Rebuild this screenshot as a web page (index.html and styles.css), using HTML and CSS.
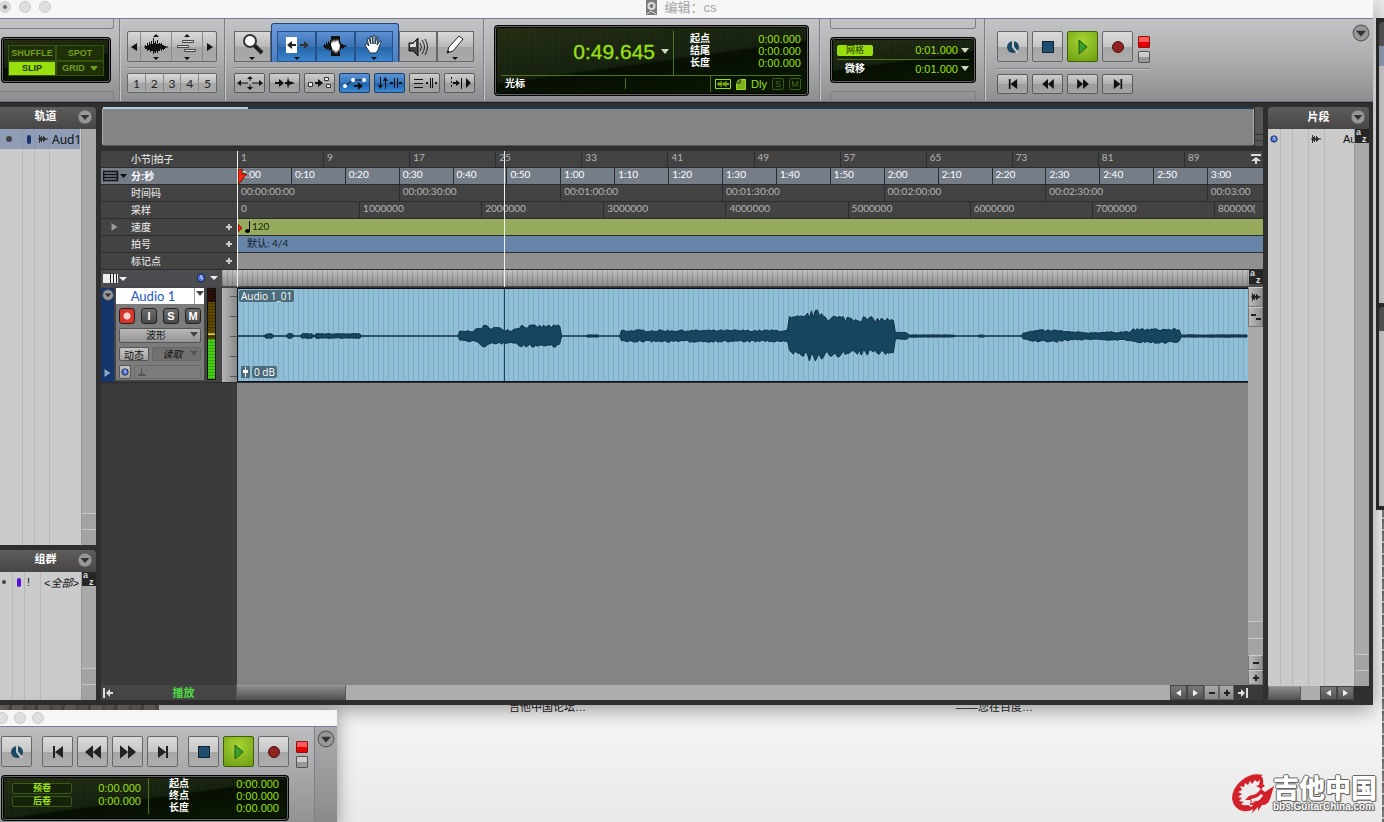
FILE: index.html
```html
<!DOCTYPE html>
<html lang="zh-CN">
<head>
<meta charset="utf-8">
<title>编辑：cs</title>
<link rel="stylesheet" href="styles.css">
</head>
<body>
<svg class="sprite" aria-hidden="true">
  <symbol id="i-down" viewBox="0 0 8 5"><path d="M0 0h8L4 5z"/></symbol>
  <symbol id="i-wave" viewBox="0 0 24 18"><path d="M0 9h24M1.500 7v4M2.500 8v3M3.500 5v8M4.500 7v5M5.500 4v8M6.500 6v8M7.500 3v10M8.500 6v7M9.500 0v16M10.500 5v9M11.500 3v12M12.500 6v7M13.500 2v13M14.500 6v7M15.500 5v8M16.500 6v5M17.500 5v8M18.500 7v4M19.500 7v5M20.500 8v3M21.500 8v2" fill="none" stroke="currentColor"/></symbol>
  <symbol id="i-clip" viewBox="0 0 10 10"><path d="M0 5h2M1.500 1v8M2.500 3v4M3.500 2v6M4.500 4v2M5.500 2v6M6.500 3v4M7.500 4v2M8 5h2" fill="none" stroke="currentColor"/></symbol>
  <symbol id="i-rtz" viewBox="0 0 14 12"><path d="M2 0h2v12H2zM12 0v12L4 6z"/></symbol>
  <symbol id="i-rew" viewBox="0 0 14 12"><path d="M7 0v12L0 6zM14 0v12L7 6z"/></symbol>
  <symbol id="i-ffw" viewBox="0 0 14 12"><path d="M0 0v12l7-6zM7 0v12l7-6z"/></symbol>
  <symbol id="i-end" viewBox="0 0 14 12"><path d="M10 0h2v12h-2zM2 0v12l8-6z"/></symbol>
  <symbol id="i-online" viewBox="0 0 14 14"><circle cx="7" cy="7" r="6" fill="#1d4a63"/><path d="M7 0v7l5 6" fill="none" stroke="#ccc" stroke-width="2"/></symbol>
  <symbol id="i-stop" viewBox="0 0 14 14"><path d="M1 1h12v12H1z" fill="#123"/><path d="M2 2h10v10H2z" fill="#1f4f6e"/></symbol>
  <symbol id="i-play" viewBox="0 0 14 16"><path d="M3 1v14l8-7z" fill="#37a12c" stroke="#1d5a14"/></symbol>
  <symbol id="i-rec" viewBox="0 0 14 14"><circle cx="7" cy="7" r="5.500" fill="#8f2320" stroke="#4b1512"/></symbol>
  <symbol id="i-menu" viewBox="0 0 16 16"><circle cx="8" cy="8" r="7" fill="#989898" stroke="#5c5c5c"/><path d="M3.500 6h9L8 11z" fill="#333"/></symbol>
  <symbol id="i-clock" viewBox="0 0 10 10"><circle cx="5" cy="5" r="4" fill="#4c74d8" stroke="#15204a"/><path d="M5 2v3l2 1" fill="none" stroke="#e8eeff"/></symbol>
  <symbol id="i-az" viewBox="0 0 14 14"><path d="M0 0h14v14H0z" fill="#262626"/><text x="1" y="6" class="az">a</text><text x="7" y="13" class="az">z</text></symbol>
  <symbol id="i-left" viewBox="0 0 6 8"><path d="M6 0v8L0 4z"/></symbol>
  <symbol id="i-right" viewBox="0 0 6 8"><path d="M0 0v8l6-4z"/></symbol>
  <symbol id="i-plus" viewBox="0 0 8 8"><path d="M3 1h2v2h2v2H5v2H3V5H1V3h2z"/></symbol>
  <symbol id="i-minus" viewBox="0 0 8 8"><path d="M1 3h6v2H1z"/></symbol>
</svg>

<main class="desktop">
  <div class="webpage"><span>吉他中国论坛…</span><span>——您在百度…</span></div>
  <div class="stones"></div>
  <aside class="side-window"><div class="sw-title"></div><div class="sw-head"></div><div class="sw-row"></div><div class="sw-list"></div><div class="sw-head"></div><div class="sw-list short"></div></aside>
  <div class="stones right"></div>

  <section class="window edit-window">
    <header class="titlebar">
      <div class="lights"><i class="on"></i><i></i><i></i></div>
      <h1><svg width="13" height="16" viewBox="0 0 13 16"><path d="M1 0h11v15H1z" fill="#7b7b80"/><circle cx="6.500" cy="6" r="4" fill="#ddd"/><circle cx="6.500" cy="6" r="2" fill="#77777c"/><path d="M2 14l4-3 5 3" fill="none" stroke="#ddd"/></svg>编辑：cs</h1>
    </header>

    <div class="toolbar">
      <section class="seg modes notched">
        <div class="lcd mode-lcd">
          <button>SHUFFLE</button><button>SPOT</button>
          <button class="on">SLIP</button><button>GRID<svg class="ic" width="8" height="5"><use href="#i-down"/></svg></button>
        </div>
      </section>

      <section class="seg zoomseg">
        <div class="group tall">
          <button class="thin" aria-label="缩小"><svg width="6" height="10"><use href="#i-left"/></svg></button>
          <button aria-label="音频缩放"><svg width="26" height="26" viewBox="0 0 26 26"><path d="M10 3l3-3 3 3zM10 23l3 3 3-3z"/><svg x="1" y="4" width="24" height="18"><use href="#i-wave"/></svg></svg></button>
          <button aria-label="MIDI缩放"><svg width="26" height="26" viewBox="0 0 26 26"><path d="M10 3l3-3 3 3zM10 23l3 3 3-3z"/><path d="M8.500 6.500h11v2h-11zM3.500 11.500h11v2h-11zM10.500 15.500h11v2h-11z" fill="#ddd" stroke="#444"/></svg></button>
          <button class="thin" aria-label="放大"><svg width="6" height="10"><use href="#i-right"/></svg></button>
        </div>
        <hr>
        <div class="group nums"><button>1</button><button>2</button><button>3</button><button>4</button><button>5</button></div>
      </section>

      <section class="seg tools">
        <div class="tool-row">
          <button class="tool" aria-label="缩放工具"><svg width="24" height="28" viewBox="0 0 24 28"><path d="M13 12l8 8" stroke="#222" stroke-width="4"/><circle cx="9" cy="8" r="6" fill="#fff" stroke="#333" stroke-width="2"/><path d="M8 24h6l-3 3z"/></svg></button>
          <div class="smart">
            <button aria-label="修剪"><svg width="26" height="28" viewBox="0 0 26 28"><path d="M2 4h11v16H2z" fill="#fff"/><path d="M3 12l5-4v3h4v2H8v3z" fill="#222"/><path d="M25 12l-5-4v3h-4v2h4v3z" fill="#333"/><path d="M10 24h6l-3 3z"/></svg></button>
            <button aria-label="选择"><svg width="26" height="28" viewBox="0 0 26 28"><svg x="1" y="4" width="24" height="18"><use href="#i-wave"/></svg><path d="M9 3h9v20H9z" fill="#111"/><path d="M9 12l1-5 1 3 1-4 1 4 1-4 1 3 1-3 1 4 1 2-1 7-1-3-1 5-1-4-1 4-1-5-1 3-1-4z" fill="#fff"/></svg></button>
            <button aria-label="抓取"><svg width="24" height="28" viewBox="0 0 24 28"><path d="M8 20L3 12q0-2 2-1l2 2L5 6q1-2 2 0l2 5-1-7q1-2 2 0l1 7V3q1-2 2 0v8l2-7q2-1 1 1l-1 7 3-4q2 0 1 1l-3 8-2 3z" fill="#fff" stroke="#234"/><path d="M9 24h6l-3 3z"/></svg></button>
          </div>
          <button class="tool" aria-label="刷选"><svg width="24" height="24" viewBox="0 0 24 24"><path d="M3 8h4l5-5v18l-5-5H3z" fill="#444" stroke="#111"/><path d="M4 9h3l3-3v6H4z" fill="#ddd"/><path d="M14 8q3 4 0 8M16 5q5 7 0 14M19 4q5 8 0 16" fill="none" stroke="#222"/></svg></button>
          <button class="tool" aria-label="铅笔"><svg width="24" height="28" viewBox="0 0 24 28"><path d="M4 20l2-6L16 3l4 3-10 12z" fill="#fff" stroke="#222"/><path d="M4 20l1-3 2 2z"/><path d="M9 24h6l-3 3z"/></svg></button>
        </div>
        <hr>
        <div class="btn-row">
          <button class="small" aria-label="缩放切换"><svg width="26" height="14" viewBox="0 0 26 14"><path d="M0 7l4-3v2.500h7v1H4V10zM26 7l-4-3v2.500h-7v1h7V10zM13 0l3 3h-2.500v2h-1V3H10zM13 14l3-3h-2.500V9h-1v2H10z"/></svg></button>
          <button class="small" aria-label="瞬态"><svg width="24" height="14" viewBox="0 0 24 14"><path d="M2 6h4V3l5 4-5 4V8H2zM12 6h2l1-5 1 4 6 2-6 2-1 4-1-5h-2z"/></svg></button>
          <button class="small" aria-label="镜像MIDI"><svg width="24" height="14" viewBox="0 0 24 14"><path d="M.5 6.500h4v4h-4zM16.500 1.500h4v3h-4zM18.500 8.500h4v3h-4z" fill="#eee" stroke="#333"/><path d="M7 6h3V3l5 4-5 4V8H7z"/></svg></button>
          <button class="small blue" aria-label="自动化跟随"><svg width="26" height="14" viewBox="0 0 26 14"><path d="M4 9l7-5h12" fill="none" stroke="#111"/><circle cx="3" cy="10" r="2" fill="#fff"/><circle cx="11" cy="4" r="2" fill="#fff"/><circle cx="22" cy="4" r="2" fill="#fff"/><path d="M12 9h4V6l5 4-5 4v-3h-4z"/></svg></button>
          <button class="small blue" aria-label="链接时间线"><svg width="26" height="14" viewBox="0 0 26 14"><path d="M3 1h1v8h2l-3 4-2-4h2zM8 13h1V5h2L8 1 6 5h2zM13 6h3v2h-3zM17 2h1v10h-1zM20 2h1v10h-1zM22 6h3v2h-3z"/></svg></button>
          <button class="small" aria-label="链接轨道"><svg width="26" height="14" viewBox="0 0 26 14"><path d="M2 3h9v1H2zM2 7h9v1H2zM2 11h9v1H2zM14 6h2v2h-2zM18 2h1v10h-1zM20 2h1v10h-1zM23 6h2v2h-2z"/></svg></button>
          <button class="small" aria-label="插入跟随"><svg width="24" height="14" viewBox="0 0 24 14"><path d="M3 1h1v2H3zM3 5h1v2H3zM3 9h1v2H3zM5 6h3V4l4 3-4 3V8H5zM13 2h1v11h-1zM18 2v10l5-5z"/></svg></button>
        </div>
      </section>

      <section class="seg counter">
        <div class="lcd counter-lcd">
          <div class="main-time"><output>0:49.645</output><svg class="pale" width="8" height="5"><use href="#i-down"/></svg></div>
          <dl class="times"><dt>起点</dt><dd>0:00.000</dd><dt>结尾</dt><dd>0:00.000</dd><dt>长度</dt><dd>0:00.000</dd></dl>
          <div class="cursor"><b>光标</b><span></span><div class="flags"><svg width="16" height="10" viewBox="0 0 16 10"><path d="M.5.5h15v9H.5z" fill="none" stroke="#9be012"/><path d="M2 5h12M4 3v4M6 2v6M9 3v4M11 2v6M13 4v2" stroke="#9be012"/></svg><svg width="10" height="11" viewBox="0 0 10 11"><path d="M3 .5h6.500v10h-9V4z" fill="#7fae22" stroke="#9be012"/><path d="M0 4h4V0" fill="none" stroke="#132306"/></svg><em>Dly</em><i>S</i><i>M</i></div></div>
        </div>
      </section>

      <section class="seg gridseg notched">
        <div class="lcd grid-lcd">
          <div><b class="chip">网格</b><output>0:01.000</output><svg class="pale" width="8" height="5"><use href="#i-down"/></svg></div>
          <div><b>微移</b><output>0:01.000</output><svg class="pale" width="8" height="5"><use href="#i-down"/></svg></div>
        </div>
      </section>

      <section class="seg transport">
        <div class="btn-row">
          <button class="big" aria-label="联机"><svg width="14" height="14"><use href="#i-online"/></svg></button>
          <button class="big" aria-label="停止"><svg width="14" height="14"><use href="#i-stop"/></svg></button>
          <button class="big green" aria-label="播放"><svg width="14" height="16"><use href="#i-play"/></svg></button>
          <button class="big" aria-label="录音"><svg width="14" height="14"><use href="#i-rec"/></svg></button>
          <div class="leds"><i class="red"></i><i></i></div>
        </div>
        <hr>
        <div class="btn-row">
          <button class="small" aria-label="回到开头"><svg width="12" height="10"><use href="#i-rtz"/></svg></button>
          <button class="small" aria-label="快退"><svg width="12" height="10"><use href="#i-rew"/></svg></button>
          <button class="small" aria-label="快进"><svg width="12" height="10"><use href="#i-ffw"/></svg></button>
          <button class="small" aria-label="到结尾"><svg width="12" height="10"><use href="#i-end"/></svg></button>
        </div>
      </section>
      <button class="round" aria-label="工具栏菜单"><svg width="18" height="18"><use href="#i-menu"/></svg></button>
    </div>

    <div class="workspace">
      <div class="sidebar left">
        <section class="panel tracks-panel">
          <header><h2>轨道</h2><button class="round" aria-label="轨道菜单"><svg width="16" height="16"><use href="#i-menu"/></svg></button></header>
          <div class="list">
            <div class="cols c1"><div class="row sel"><i class="dot"></i><i class="pill"></i><svg width="10" height="10"><use href="#i-clip"/></svg><span>Aud1</span></div></div>
            <div class="vscroll"><i></i><i></i></div>
          </div>
        </section>
        <section class="panel groups-panel">
          <header><h2>组群</h2><button class="round" aria-label="组群菜单"><svg width="16" height="16"><use href="#i-menu"/></svg></button></header>
          <div class="list">
            <div class="cols c2"><div class="row"><i class="dot sm"></i><i class="pill purple"></i><span>!</span><em>&lt;全部&gt;</em></div></div>
            <div class="vscroll"><svg width="14" height="14"><use href="#i-az"/></svg><i></i><i></i></div>
          </div>
        </section>
      </div>

      <div class="edit">
        <div class="overview"><div class="ov-area"><i></i></div><div class="ov-side"></div></div>

        <div class="timeline">
          <div class="ruler"><div class="lab">小节|拍子</div><div class="scale bars"><span>1</span><span>9</span><span>17</span><span>25</span><span>33</span><span>41</span><span>49</span><span>57</span><span>65</span><span>73</span><span>81</span><span>89</span></div><button class="totop" aria-label="收起标尺"><svg width="10" height="10" viewBox="0 0 10 10"><path d="M0 0h10v2H0zM5 3l5 4H6v3H4V7H0z"/></svg></button></div>
          <div class="ruler main"><div class="lab"><svg class="view" width="24" height="12" viewBox="0 0 24 12"><path d="M.5 1.500h14v9H.5zM0 4.500h15M0 7.500h15" fill="none" stroke="#111" stroke-width="1.500"/><path d="M17 4h7l-3.500 4z"/></svg>分:秒</div><div class="scale mins"><span>0:00</span><span>0:10</span><span>0:20</span><span>0:30</span><span>0:40</span><span>0:50</span><span>1:00</span><span>1:10</span><span>1:20</span><span>1:30</span><span>1:40</span><span>1:50</span><span>2:00</span><span>2:10</span><span>2:20</span><span>2:30</span><span>2:40</span><span>2:50</span><span>3:00</span></div><svg class="mark" width="9" height="15" viewBox="0 0 9 15"><path d="M0 0h4v5h5L1 14.500H0z" fill="#ee2a12" stroke="#5b0e05"/></svg></div>
          <div class="ruler"><div class="lab">时间码</div><div class="scale code"><span>00:00:00:00</span><span>00:00:30:00</span><span>00:01:00:00</span><span>00:01:30:00</span><span>00:02:00:00</span><span>00:02:30:00</span><span>00:03:00</span></div></div>
          <div class="ruler"><div class="lab">采样</div><div class="scale samples"><span>0</span><span>1000000</span><span>2000000</span><span>3000000</span><span>4000000</span><span>5000000</span><span>6000000</span><span>7000000</span><span>800000(</span></div></div>
          <div class="ruler"><div class="lab"><svg class="tri" width="7" height="8"><use href="#i-right"/></svg>速度<button aria-label="添加速度"><svg width="8" height="8"><use href="#i-plus"/></svg></button></div><div class="scale tempo"><svg width="15" height="14" viewBox="0 0 15 14"><path d="M1 4l4 4-4 4z" fill="#ee2a12" stroke="#7d1509"/><path d="M12 1h1v10h-1z"/><ellipse cx="10.500" cy="11" rx="2.500" ry="2"/></svg>120</div></div>
          <div class="ruler"><div class="lab">拍号<button aria-label="添加拍号"><svg width="8" height="8"><use href="#i-plus"/></svg></button></div><div class="scale meter">默认: 4/4</div></div>
          <div class="ruler"><div class="lab">标记点<button aria-label="添加标记"><svg width="8" height="8"><use href="#i-plus"/></svg></button></div><div class="scale markers"></div></div>
          <div class="trackbar"><div class="tb-left"><svg width="24" height="11" viewBox="0 0 24 11"><path d="M0 1h15v9H0z" fill="#eee"/><path d="M7.500 1v9M10.500 1v9M13.500 1v9" stroke="#222"/><path d="M16 4h8l-4 4z" fill="#eee"/></svg><svg width="22" height="10" viewBox="0 0 22 10"><svg width="10" height="10"><use href="#i-clock"/></svg><path d="M14 3h8l-4 4z" fill="#eee"/></svg></div><div class="tb-stripes"></div><svg width="14" height="14"><use href="#i-az"/></svg></div>
          <div class="overlay"><i></i></div>
        </div>

        <div class="lanes">
          <div class="lanes-main">
            <div class="track">
              <div class="track-head">
                <div class="strip"><svg width="12" height="12"><use href="#i-menu"/></svg><svg width="7" height="8"><use href="#i-right"/></svg></div>
                <div class="controls">
                  <button class="name"><span>Audio 1</span><svg width="8" height="5"><use href="#i-down"/></svg></button>
                  <div class="rism"><button class="arm" aria-label="录音准备"></button><button>I</button><button>S</button><button>M</button></div>
                  <label class="pick"><select aria-label="轨道视图"><option>波形</option></select><svg width="8" height="5"><use href="#i-down"/></svg></label>
                  <div class="pair"><button>动态</button><label class="pick flat"><select aria-label="自动化模式"><option>读取</option></select><svg width="8" height="5"><use href="#i-down"/></svg></label></div>
                  <div class="pair"><button class="clk" aria-label="时基"><svg width="8" height="8"><use href="#i-clock"/></svg></button><div class="elastic"><svg width="8" height="8" viewBox="0 0 8 8"><path d="M3 0h1v5l4 2v1H0V7l3-2z"/></svg></div></div>
                </div>
                <div class="vu"><i></i></div>
                <div class="vruler"></div>
              </div>
              <div class="clip">
                <svg class="wave" viewBox="0 0 1011 92" preserveAspectRatio="none"><path id="wave" d="M0 47h1011"/></svg>
                <span class="cname">Audio 1_01</span>
                <span class="gain"><svg width="9" height="12" viewBox="0 0 9 12"><path d="M4 1h1v10H4zM2 4h5v3H2z"/></svg><b>0 dB</b></span>
                <i class="head"></i>
              </div>
            </div>
            <div class="empty"><div></div><div></div></div>
          </div>
          <div class="vscroll wide">
            <button aria-label="波形放大"><svg width="10" height="10"><use href="#i-clip"/></svg></button>
            <button aria-label="MIDI放大"><svg width="10" height="8" viewBox="0 0 10 8"><path d="M0 1h5v2H0zM5 5h5v2H5z"/></svg></button>
            <i></i><i></i>
            <button aria-label="缩小轨道"><svg width="8" height="8"><use href="#i-minus"/></svg></button>
            <button aria-label="放大轨道"><svg width="8" height="8"><use href="#i-plus"/></svg></button>
          </div>
        </div>

        <footer class="bottombar">
          <div class="status"><svg width="10" height="10" viewBox="0 0 10 10"><path d="M0 0h2v10H0zM3 5l4-4v3h3v2H7v3z"/></svg><span>播放</span></div>
          <div class="hscroll"><i></i></div>
          <button class="dark" aria-label="左"><svg width="5" height="8"><use href="#i-left"/></svg></button>
          <button class="dark" aria-label="右"><svg width="5" height="8"><use href="#i-right"/></svg></button>
          <button aria-label="水平缩小"><svg width="8" height="8"><use href="#i-minus"/></svg></button>
          <button aria-label="水平放大"><svg width="8" height="8"><use href="#i-plus"/></svg></button>
          <div class="corner"><svg width="10" height="10" viewBox="0 0 10 10"><path d="M8 0h2v10H8zM7 5L3 1v3H0v2h3v3z"/></svg></div>
        </footer>
      </div>

      <div class="sidebar right">
        <section class="panel clips-panel">
          <header><h2>片段</h2><button class="round" aria-label="片段菜单"><svg width="16" height="16"><use href="#i-menu"/></svg></button></header>
          <div class="list">
            <div class="cols c3"><div class="row"><svg width="8" height="8"><use href="#i-clock"/></svg><svg width="10" height="10"><use href="#i-clip"/></svg><span>Au</span></div></div>
            <div class="vscroll"><svg width="14" height="14"><use href="#i-az"/></svg><i></i><i></i></div>
          </div>
          <footer><div class="hscroll"><i></i></div><button class="dark" aria-label="左"><svg width="5" height="8"><use href="#i-left"/></svg></button><button class="dark" aria-label="右"><svg width="5" height="8"><use href="#i-right"/></svg></button></footer>
        </section>
      </div>
    </div>
  </section>

  <section class="window transport-window">
    <header class="titlebar"><div class="lights"><i></i><i></i><i></i></div></header>
    <div class="tw-body">
      <div class="tw-main">
        <div class="tw-row">
          <div class="btn-row"><button class="big" aria-label="联机"><svg width="14" height="14"><use href="#i-online"/></svg></button></div>
          <div class="btn-row">
            <button class="big" aria-label="回到开头"><svg width="14" height="14"><use href="#i-rtz"/></svg></button>
            <button class="big" aria-label="快退"><svg width="16" height="14"><use href="#i-rew"/></svg></button>
            <button class="big" aria-label="快进"><svg width="16" height="14"><use href="#i-ffw"/></svg></button>
            <button class="big" aria-label="到结尾"><svg width="14" height="14"><use href="#i-end"/></svg></button>
          </div>
          <div class="btn-row">
            <button class="big" aria-label="停止"><svg width="14" height="14"><use href="#i-stop"/></svg></button>
            <button class="big green" aria-label="播放"><svg width="14" height="16"><use href="#i-play"/></svg></button>
            <button class="big" aria-label="录音"><svg width="14" height="14"><use href="#i-rec"/></svg></button>
            <div class="leds"><i class="red"></i><i></i></div>
          </div>
        </div>
        <div class="lcd tw-lcd">
          <dl class="rolls"><dt>预卷</dt><dd>0:00.000</dd><dt>后卷</dt><dd>0:00.000</dd></dl>
          <dl class="times"><dt>起点</dt><dd>0:00.000</dd><dt>终点</dt><dd>0:00.000</dd><dt>长度</dt><dd>0:00.000</dd></dl>
        </div>
      </div>
      <div class="tw-side"><button class="round" aria-label="走带菜单"><svg width="18" height="18"><use href="#i-menu"/></svg></button></div>
    </div>
  </section>

  <div class="brand">
    <svg width="42" height="40" viewBox="0 0 42 40"><path d="M31 2Q20-1 10 7 0 15 0 26q2 10 11 12 6 1 10-2l-1 4 6-6v4l4-6q6 0 8-6l4-13-9 6-4-3-5 5-7 2-4 4 6 0-3 5q-5 1-7-1l3-2-5-1 3-3-4-1 4-3-4-2 4-2-2-4 4 1 1-4 3 2 2-4 2 3 3-4 2 2 3-2-1 5-3 1 4 2 1 4 1-4 3-2-2-2q1-6-2-8z" fill="#d3202b"/><path d="M19 26q7-1 10-5l3 2-4 5-8 0zM15 31l5-3 4 1-5 5z" fill="#f0eded"/><path d="M18 31q9 0 14-8l6-1" fill="none" stroke="#d3202b" stroke-width="2"/></svg>
    <div><strong>吉他中国</strong><small>bbs.GuitarChina.com</small></div>
  </div>
</main>
<script src="wave.js"></script>
</body>
</html>
```
FILE: styles.css
```css
* { box-sizing: border-box; }
body { margin: 0; font-family: "Liberation Sans", "Noto Sans CJK SC", sans-serif; font-size: 10px; color: #111; }
button, select { font: inherit; color: inherit; margin: 0; padding: 0; border: 0; background: none; border-radius: 0; display: flex; align-items: center; justify-content: center; }
h1, h2, dl, dd, dt { margin: 0; font-weight: normal; }
svg { display: block; flex: none; fill: currentColor; }
i, em { font-style: normal; }
.sprite { position: absolute; width: 0; height: 0; }
.az { font: bold 9px "Liberation Sans", sans-serif; fill: #ddd; }
.desktop { position: relative; height: 100vh; overflow: hidden; background: linear-gradient(#f4f4f4 88%, #e9e9e9); }
.window { position: absolute; display: flex; flex-direction: column; }

/* Background */
.webpage { position: absolute; inset: 700px 0 auto; padding-left: 509px; display: flex; gap: 370px; font-size: 11px; line-height: 15px; color: #222; }
.stones { position: absolute; left: 0; top: 705px; width: 159px; height: 6px; background: repeating-linear-gradient(100deg, #79736c 0 9px, #625c54 9px 12px, #857e75 12px 23px, #6d675f 23px 26px); }
.stones.right { left: auto; right: 0; top: 510px; width: 2px; height: auto; bottom: 0; background: repeating-linear-gradient(#777 0 7px, #bbb 7px 9px, #666 9px 12px); }
.side-window { position: absolute; right: 0; top: 0; width: 8px; height: 510px; padding: 0 0 4px 3px; display: flex; flex-direction: column; background: #2d2d2d; }
.sw-title { height: 18px; background: #eee; margin-left: -3px; }
.sw-head { height: 24px; background: #555; margin-top: 4px; border-radius: 4px 0 0; }
.sw-row { height: 20px; background: #8f9cb2; }
.sw-list { flex: 1; background: #cbcbcb; }
.sw-list.short { flex: none; height: 175px; }

/* Window chrome */
.edit-window { left: 0; right: 11px; top: 0; height: 705px; box-shadow: 0 4px 20px rgba(0,0,0,.4); background: #2f2f2f; }
.titlebar { height: 18px; flex: none; display: flex; align-items: flex-start; background: #f6f6f6; position: relative; }
.titlebar h1 { flex: 1; display: flex; justify-content: center; gap: 6px; font-size: 13px; line-height: 15px; color: #a5a5a5; padding-right: 70px; }
.lights { display: flex; gap: 8px; padding-top: 1px; margin-left: -1px; width: 60px; }
.lights i { width: 12px; height: 12px; border-radius: 50%; background: #dedede; border: 1px solid #cbcbcb; }
.lights .on { background: radial-gradient(circle, #666 0 1px, #dedede 3px); }

/* Toolbar */
.toolbar { height: 84px; flex: none; display: flex; border-top: 1px solid #77789a; border-bottom: 1px solid #6d6e86; background: linear-gradient(#c3c4c6, #acadaf 50%, #8d8e90); position: relative; }
.seg { border-right: 1px solid #7d7e82; box-shadow: 1px 0 #c5c6c8; padding: 12px 9px 0; flex: none; }
.seg hr { border: 0; height: 2px; margin: 5px 0 4px; background: #808184; border-bottom: 1px solid #bfc0c2; }
.notched { position: relative; }
.notched::before, .notched::after { content: ""; position: absolute; left: 10px; right: 8px; height: 9px; border: 1px solid #7f8084; }
.notched::before { top: 0; border-top: 0; border-radius: 0 0 3px 3px; }
.notched::after { bottom: 0; border-bottom: 0; border-radius: 3px 3px 0 0; }
.seg.modes { width: 120px; padding: 18px 9px 0 1px; }
.modes::before, .modes::after { left: -2px; right: 5px; }
.lcd { border: 3px solid #050505; border-radius: 4px; outline: 1px solid #666; outline-offset: -2px; color: #9be012; background: repeating-linear-gradient(90deg, rgba(0,0,0,.15) 0 1px, transparent 1px 3px), linear-gradient(172deg, #263014, #172310 50%, #071003 53%, #0b1a03); }
.mode-lcd { width: 110px; height: 46px; padding: 5px 4px 4px; display: grid; grid-template: 1fr 1fr / 1fr 1fr; font-weight: bold; font-size: 9px; color: #6f9e1c; }
.mode-lcd button { border: 1px solid #36530f; background: #1f3009; gap: 5px; }
.mode-lcd .on { background: #98df0d; color: #1d3300; }
.zoomseg { width: 105px; padding: 12px 7px 0; }
.group { display: flex; border: 1px solid #66676a; border-radius: 2px; background: linear-gradient(#d9d9d9, #b9b9b9 50%, #a6a6a6 52%, #a9a9a9); }
.group button { flex: 1; border-right: 1px solid #8a8a8a; }
.group button:last-child { border: 0; }
.group .thin { flex: none; width: 13px; }
.tall { height: 31px; }
.nums { height: 20px; font: 12px Lato, sans-serif; color: #222; }
.tools { width: 259px; }
.tool-row { display: flex; height: 31px; align-items: flex-end; }
.tool { flex: 1; height: 31px; border: 1px solid #66676a; background: linear-gradient(#d9d9d9, #b9b9b9 50%, #a6a6a6 52%, #a9a9a9); }
.smart { width: 128px; height: 39px; flex: none; padding: 7px 5px 0; display: flex; border: 1px solid #23467c; border-bottom: 0; border-radius: 3px 3px 0 0; background: linear-gradient(#6d9bd8, #4a7fc4); }
.smart button { flex: 1; border: 1px solid #284f88; background: linear-gradient(#5a8fd2, #3d74b6 50%, #2564a8 52%, #3c86cd); }
.btn-row { display: flex; gap: 4px; }
.small { width: 31px; height: 20px; flex: none; border: 1px solid #5a5b5e; border-radius: 2px; background: linear-gradient(#cdcdcd, #b0b0b0 50%, #9d9d9d 52%, #a3a3a3); }
.blue { background: linear-gradient(#5a93d4, #3577be 50%, #1f64ae 52%, #3d8ad2); border-color: #1c3f6e; }
.big { width: 31px; height: 31px; flex: none; border: 1px solid #66676a; border-radius: 2px; background: linear-gradient(#dcdcdc, #c6c6c6 50%, #a6a6a6 52%, #adadad); color: #222; }
.green { background: radial-gradient(circle at 50% 30%, #a6d535, #6d9c10); border-color: #3f5f08; }
.leds { display: flex; flex-direction: column; gap: 3px; padding: 5px 0 0 1px; }
.leds i { width: 12px; height: 12px; border: 1px solid #555; border-radius: 1px; background: linear-gradient(#ccc 50%, #999 52%); }
.leds .red { background: linear-gradient(#ff5a5a 45%, #e60000 50%); border-color: #8b1010; }
.counter { width: 336px; padding: 6px 10px 0; }
.counter-lcd { height: 71px; padding: 3px 5px 0 4px; display: grid; grid-template: 44px 17px / 1fr 127px; }
.main-time { display: flex; align-items: center; justify-content: flex-end; gap: 6px; padding: 0 4px 3px 0; font-size: 21px; -webkit-text-stroke: 0.3px; border-right: 1px solid #4d7516; }
.pale { color: #cfd6c4; }
.times { display: grid; grid-template-columns: 1fr 1fr; align-content: center; line-height: 12px; padding: 0 0 4px 16px; }
.times dt { color: #fff; font-weight: bold; }
.times dd { font-size: 11px; text-align: right; }
.cursor { grid-column: 1 / 3; display: flex; border-top: 1px solid #4d7516; color: #fff; line-height: 15px; padding-left: 4px; }
.cursor span { width: 99px; height: 11px; margin-top: 2px; border-right: 1px solid #4d7516; }
.cursor .flags { margin-left: auto; display: flex; align-items: center; gap: 5px; border-left: 1px solid #4d7516; padding-left: 4px; color: #9be012; }
.flags em { font-size: 11px; }
.flags i { width: 12px; height: 12px; border: 1px solid #3c5b12; border-radius: 2px; font-size: 9px; line-height: 10px; text-align: center; color: #4a6e18; }
.cursor b { width: 22px; }
.gridseg { width: 165px; padding: 18px 8px 0 10px; }
.grid-lcd { height: 46px; padding: 1px 4px 3px; }
.grid-lcd > div { height: 18px; display: flex; align-items: center; gap: 3px; font-size: 11px; }
.grid-lcd > div + div { border-top: 1px solid #4d7516; }
.grid-lcd b { width: 36px; height: 11px; line-height: 11px; text-align: center; font-size: 10px; color: #fff; margin-right: auto; }
.grid-lcd .chip { background: #98df0d; color: #1d3300; border-radius: 2px; font-weight: normal; font-size: 9px; }
.transport { border: 0; box-shadow: none; padding-left: 12px; }
.toolbar > .round { margin: 5px 3px auto auto; }

/* Workspace */
.workspace { flex: 1; min-height: 0; display: flex; gap: 5px; padding: 4px 4px 5px 0; border-top: 1px solid #222; }
.sidebar { display: flex; flex-direction: column; gap: 5px; flex: none; }
.left { width: 96px; }
.right { width: 101px; }
.panel { flex: 1; min-height: 0; display: flex; flex-direction: column; }
.groups-panel { flex: none; height: 150px; }
.panel header { height: 22px; flex: none; display: flex; align-items: center; background: linear-gradient(#5f5c5c, #474545); border-radius: 0 4px 0 0; color: #fff; padding: 0 3px 2px 0; }
.clips-panel header { border-radius: 4px 4px 0 0; }
.panel h2 { flex: 1; font-size: 11px; font-weight: bold; line-height: 18px; text-align: center; padding: 0 0 2px 14px; }
.clips-panel h2 { padding: 0 0 0 19px; }
.list { flex: 1; min-height: 0; display: flex; background: #cbcbcb; }
.cols { flex: 1; min-width: 0; }
.c1 { background: linear-gradient(#b9b9b9 0 0) 22px 0 / 1px 100% no-repeat, linear-gradient(#b9b9b9 0 0) 34px 0 / 1px 100% no-repeat, linear-gradient(#b9b9b9 0 0) 49px 0 / 1px 100% no-repeat; }
.c2 { background: linear-gradient(#b9b9b9 0 0) 12px 0 / 1px 100% no-repeat, linear-gradient(#b9b9b9 0 0) 24px 0 / 1px 100% no-repeat, linear-gradient(#b9b9b9 0 0) 40px 0 / 1px 100% no-repeat; }
.c3 { background: linear-gradient(#b9b9b9 0 0) 12px 0 / 1px 100% no-repeat, linear-gradient(#b9b9b9 0 0) 24px 0 / 1px 100% no-repeat, linear-gradient(#b9b9b9 0 0) 40px 0 / 1px 100% no-repeat, linear-gradient(#b9b9b9 0 0) 56px 0 / 1px 100% no-repeat; }
.row { height: 20px; display: flex; align-items: center; overflow: hidden; white-space: nowrap; color: #111; }
.c1 .row { padding-left: 6px; font: 12px "Noto Sans", sans-serif; }
.sel { background: rgba(112,132,172,.65); color: #111; margin-right: 1px; }
.dot { width: 6px; height: 6px; flex: none; border-radius: 50%; background: #444; margin-right: 15px; }
.dot.sm { width: 4px; height: 4px; margin: 0 11px 0 2px; }
.pill { width: 4px; height: 9px; flex: none; border-radius: 2px; background: #16346a; margin-right: 7px; }
.c1 svg { margin-right: 4px; color: #333; }
.c2 .purple { background: #5310e0; margin-right: 6px; }
.c2 .row { font-size: 11px; }
.c2 em { font-style: italic; font-size: 11px; margin-left: 14px; }
.c3 .row { padding-left: 2px; font-size: 11px; }
.c3 .row svg + svg { margin: 0 22px 0 33px; color: #333; }
.vscroll { width: 15px; flex: none; display: flex; flex-direction: column; align-items: center; background: #a9a9a9; border-left: 1px solid #9a9a9a; }
.vscroll i { width: 100%; height: 16px; border-top: 1px solid #c6c6c6; background: #a3a3a3; }
.vscroll i:nth-last-child(2) { margin-top: auto; }
.clips-panel footer { display: flex; height: 14px; padding-right: 15px; }
.hscroll { flex: 1; background: #adadad; }
.hscroll i { display: block; height: 100%; width: 110px; border: 1px solid #555; border-top-color: #999; background: linear-gradient(#8b8b8b, #555); }
.clips-panel .hscroll i { width: 33px; }
footer button { width: 15px; flex: none; background: linear-gradient(#aaa, #888); border: 1px solid #666; color: #222; }
footer .dark { width: 17px; background: linear-gradient(#777, #555); color: #eee; border-color: #444; }

.edit { flex: 1; min-width: 0; display: flex; flex-direction: column; }
.overview { height: 39px; flex: none; display: flex; gap: 1px; margin: 0 0 5px 1px; }
.ov-area { flex: 1; background: #848484; border-radius: 3px; border: 1px solid #aaa; border-top: 2px solid #1d3f55; border-bottom-color: #555; }
.ov-area i { display: block; width: 145px; height: 2px; margin: -2px 0 0; background: #a9cfe0; }
.ov-side { width: 8px; background: linear-gradient(#555 70%, #333 70% 73%, #555 73% 85%, #333 85% 88%, #555 88%); }
.timeline { position: relative; flex: none; color: #b5b5b5; }
.ruler { height: 17px; display: flex; background: #434343; border-bottom: 1px solid #2c2c2c; position: relative; line-height: 15px; }
.lab { width: 136px; flex: none; padding: 2px 0 0 30px; color: #ddd; position: relative; display: flex; font-weight: 500; line-height: 14px; }
.lab button { margin: 0 4px 2px auto; color: #ccc; }
.lab .tri, .lab .view { position: absolute; left: 10px; top: 4px; color: #999; }
.lab .view { left: 2px; top: 2px; color: #111; }
.scale { flex: 1; min-width: 0; display: grid; font-family: Lato, "Noto Sans CJK SC", sans-serif; font-size: 10px; line-height: 13px; }
.scale span { border-left: 1px solid #2c2c2c; padding-left: 3px; min-width: 0; white-space: nowrap; overflow: hidden; }
.bars { grid-template-columns: repeat(11, 86fr) 79fr; }
.mins { grid-template-columns: repeat(19, 27fr) 1fr; }
.code { grid-template-columns: repeat(6, 161fr) 56fr; }
.samples { grid-template-columns: repeat(8, 122fr) 49fr; }
.main { background: #757d89; color: #fff; }
.main .lab { font-weight: bold; color: #fff; }
.mark { position: absolute; left: 137px; top: 1px; }
.totop { position: absolute; right: 0; top: 0; width: 15px; height: 16px; background: #434343; color: #ddd; }
.tempo, .meter { display: flex; align-items: center; color: #1c2408; padding-bottom: 1px; }
.tempo svg { color: #000; margin-top: 1px; }
.tempo { background: #97ab5f; }
.meter { background: #6785a8; padding-left: 10px; color: #101c2c; }
.markers { background: #919090; }
.trackbar { height: 17px; display: flex; background: #4a4c50; }
.tb-left { width: 121px; padding: 3px 4px 0 2px; display: flex; justify-content: space-between; }
.tb-stripes { flex: 1; border-bottom: 1px solid #444; background: repeating-linear-gradient(90deg, rgba(0,0,0,.14) 0 1px, transparent 1px 5px), linear-gradient(#c0c0c0, #8b8b8b); }
.overlay { position: absolute; inset: 0 0 0 136px; border-left: 1px solid #f0f0f0; pointer-events: none; }
.overlay i { position: absolute; left: 26%; margin-left: -1px; top: 0; bottom: 0; width: 1px; background: #f0f0f0; }

.lanes { flex: 1; min-height: 0; display: flex; }
.lanes-main { flex: 1; min-width: 0; display: flex; flex-direction: column; }
.track { display: flex; height: 96px; flex: none; background: #303030; }
.track-head { width: 136px; flex: none; display: flex; padding: 1px 0 0; background: #444; border-bottom: 1px solid #2a2a2a; }
.strip { width: 13px; background: #14366a; display: flex; flex-direction: column; justify-content: space-between; align-items: center; padding: 1px 0 5px; color: #8fa3c2; }
.controls { width: 88px; margin: 0 3px 2px 2px; background: #7c7c7c; display: flex; flex-direction: column; gap: 4px; padding-bottom: 2px; }
.name { width: 100%; height: 16px; flex: none; background: #fff; color: #2458c4; font: 13px Lato, sans-serif; }
.name span { flex: 1; padding-right: 4px; }
.name svg { width: 10px; height: 16px; padding: 3px 0 8px 1px; border-left: 1px solid #999; color: #444; }
.rism { display: flex; gap: 6px; padding: 0 3px; }
.rism button { width: 16px; height: 16px; flex: none; border: 1px solid #222; border-radius: 3px; background: linear-gradient(#6c6c6c, #4a4a4a); color: #fff; font-weight: bold; font-size: 11px; }
.rism .arm { background: radial-gradient(circle, #ffd6d0 0 3px, #d8352b 4px); }
.pick { position: relative; flex: 1; margin: 0 3px; max-height: 15px; border: 1px solid #555; border-radius: 2px; background: linear-gradient(#b9b9b9, #939393); }
.pick select { width: 100%; height: 13px; appearance: none; text-align-last: center; padding-right: 8px; line-height: 13px; }
.pick svg { position: absolute; right: 2px; top: 3px; color: #444; pointer-events: none; }
.pair { display: flex; gap: 3px; padding: 0 3px; height: 14px; }
.pair button { width: 30px; border: 1px solid #555; border-radius: 2px; background: linear-gradient(#c6c6c6, #a2a2a2); }
.pair .clk { width: 12px; }
.pair .flat { margin: 0; background: #717171; border-color: #666; font-style: italic; }
.flat svg { color: #555; }
.elastic { flex: 1; border: 1px solid #6c6c6c; border-radius: 2px; padding: 2px 3px; color: #555; }
.vu { width: 9px; padding: 1px; background: #111; margin-bottom: 2px; }
.vu i { display: block; height: 100%; background: repeating-linear-gradient(transparent 0 2px, rgba(0,0,0,.22) 2px 3px), linear-gradient(#2b0f08 0 15%, #5e4804 15% 49%, #d8d23a 49% 51%, #54420a 51% 56%, #45d016 56%); }
.vruler { flex: 1; margin-left: 6px; background: repeating-linear-gradient(#555 0 1px, transparent 1px 20px) 8px 8px / 7px 100% no-repeat, linear-gradient(90deg, #b5b5b5, #888); }
.clip { flex: 1; min-width: 0; position: relative; margin-bottom: 1px; border: 1px solid #0b1116; border-width: 1px 0 1px 1px; margin-top: 1px; background: repeating-linear-gradient(90deg, #7dadc6 0 1px, transparent 1px 5px), #91bfd8; }
.wave { width: 100%; height: 100%; fill: #16455f; stroke: #0d2d42; }
.cname, .gain b { background: #4c6b7b; color: #fff; border-radius: 2px; padding: 0 2px; font: 10px/12px "Open Sans", sans-serif; }
.cname { position: absolute; left: 1px; top: 1px; }
.gain { position: absolute; left: 3px; bottom: 3px; display: flex; gap: 2px; align-items: flex-end; color: #fff; }
.gain svg { background: #4c6b7b; }
.head { position: absolute; left: 26%; margin-left: 3px; top: 0; bottom: 0; width: 1px; background: #16455f; }
.empty { flex: 1; display: flex; }
.empty div { width: 136px; background: #3b3b3b; }
.empty div + div { flex: 1; background: #848484; }
.wide { border: 0; }
.wide button { width: 15px; height: 20px; border: 1px solid #777; background: linear-gradient(90deg, #bbb, #8f8f8f); color: #222; border-top-color: #ccc; }
.wide i + button, .wide button:last-child { height: 15px; }
.wide i { height: 17px; }
.wide i:nth-child(3) { margin-top: auto; }
.bottombar { height: 15px; flex: none; display: flex; background: #464646; }
.status { width: 135px; display: flex; align-items: center; padding: 0 2px; color: #ddd; line-height: 14px; }
.status span { flex: 1; padding-left: 20px; text-align: center; color: #4fdc42; font-weight: bold; font-size: 11px; }
.corner { width: 29px; padding: 3px 4px; color: #ddd; background: #3a3a3a; }

/* Transport window */
.transport-window { left: 0; top: 710px; width: 337px; box-shadow: 0 3px 16px rgba(0,0,0,.4); }
.transport-window .titlebar { height: 16px; padding-top: 1px; }
.transport-window .lights { margin-left: -4px; gap: 6px; }
.tw-body { display: flex; border-top: 1px solid #77789a; background: linear-gradient(#bbbcbe, #909193); }
.tw-main { flex: 1; padding: 9px 5px 3px 1px; }
.tw-row { display: flex; gap: 10px; }
.transport-window .leds { padding-left: 3px; }
.tw-lcd { margin: 7px 20px 0 0; height: 46px; padding: 0 7px 4px; display: grid; grid-template-columns: 138px 1fr; }
.rolls { display: grid; grid-template-columns: 60px 1fr; gap: 2px 0; align-content: center; padding: 0 7px 3px 1px; border-right: 1px solid #4d7516; line-height: 11px; }
.rolls dt { border: 1px solid #3c5b12; border-radius: 2px; text-align: center; font-size: 9px; line-height: 9px; font-weight: bold; background: #15230a; }
.rolls dd { text-align: right; font-size: 11px; }
.tw-lcd .times { padding: 0 0 0 20px; }
.tw-side { width: 23px; border-left: 1px solid #7d7e82; padding: 3px 2px; background: rgba(120,120,120,.25); }

/* Watermark */
.brand { position: absolute; right: 7px; bottom: 9px; display: flex; align-items: flex-end; color: #fff; }
.brand div { display: flex; flex-direction: column; margin-left: -1px; }
.brand strong, .brand small { text-shadow: 1px 0 #666, -1px 0 #666, 0 1px #666, 0 -1px #666, 1px 1px 1px #555; }
.brand strong { font: 900 26px/29px "Noto Sans CJK SC", sans-serif; }
.brand small { font: bold 10px/12px "Liberation Sans", sans-serif; }
```
FILE: wave.js
```javascript
{
  // Envelope segments in clip units: [startX, endX, startHeight, endHeight]
  const envelope = [
    [27, 36, 2, 2], [49, 56, 2, 2], [64, 76, 2, 2], [78, 124, 2, 2],
    [221, 236, 4, 5], [236, 246, 5, 9], [246, 262, 9, 7], [262, 275, 7, 5], [275, 285, 6, 10], [285, 324, 9, 9],
    [349, 362, 1, 1], [383, 551, 5, 5],
    [551, 570, 16, 17], [570, 588, 20, 22], [588, 610, 18, 16], [610, 645, 17, 15], [645, 658, 16, 13],
    [658, 672, 3, 3], [672, 718, 1, 1], [741, 748, 1, 1],
    [786, 800, 3, 5], [800, 825, 5, 5], [825, 850, 4, 3], [850, 896, 3, 4], [896, 944, 6, 6], [944, 1011, 1, 1]
  ];

  let seed = 7;
  const random = () => {
    seed = (seed * 16807) % 2147483647;
    return seed / 2147483647;
  };

  const heightAt = (x) => {
    const part = envelope.find(([from, to]) => x >= from && x < to);
    if (!part) return 0;
    const base = part[2] + (part[3] - part[2]) * (x - part[0]) / (part[1] - part[0]);
    return base * (0.85 + random() * 0.4);
  };

  const middle = 47;
  const upper = [];
  const lower = [];
  for (let x = 0; x <= 1011; x += 2) {
    upper.push(`${x} ${(middle - heightAt(x)).toFixed(1)}`);
    lower.unshift(`${x} ${(middle + heightAt(x)).toFixed(1)}`);
  }
  document.getElementById("wave").setAttribute("d", `M${upper.join("L")}L${lower.join("L")}Z`);
}
```
